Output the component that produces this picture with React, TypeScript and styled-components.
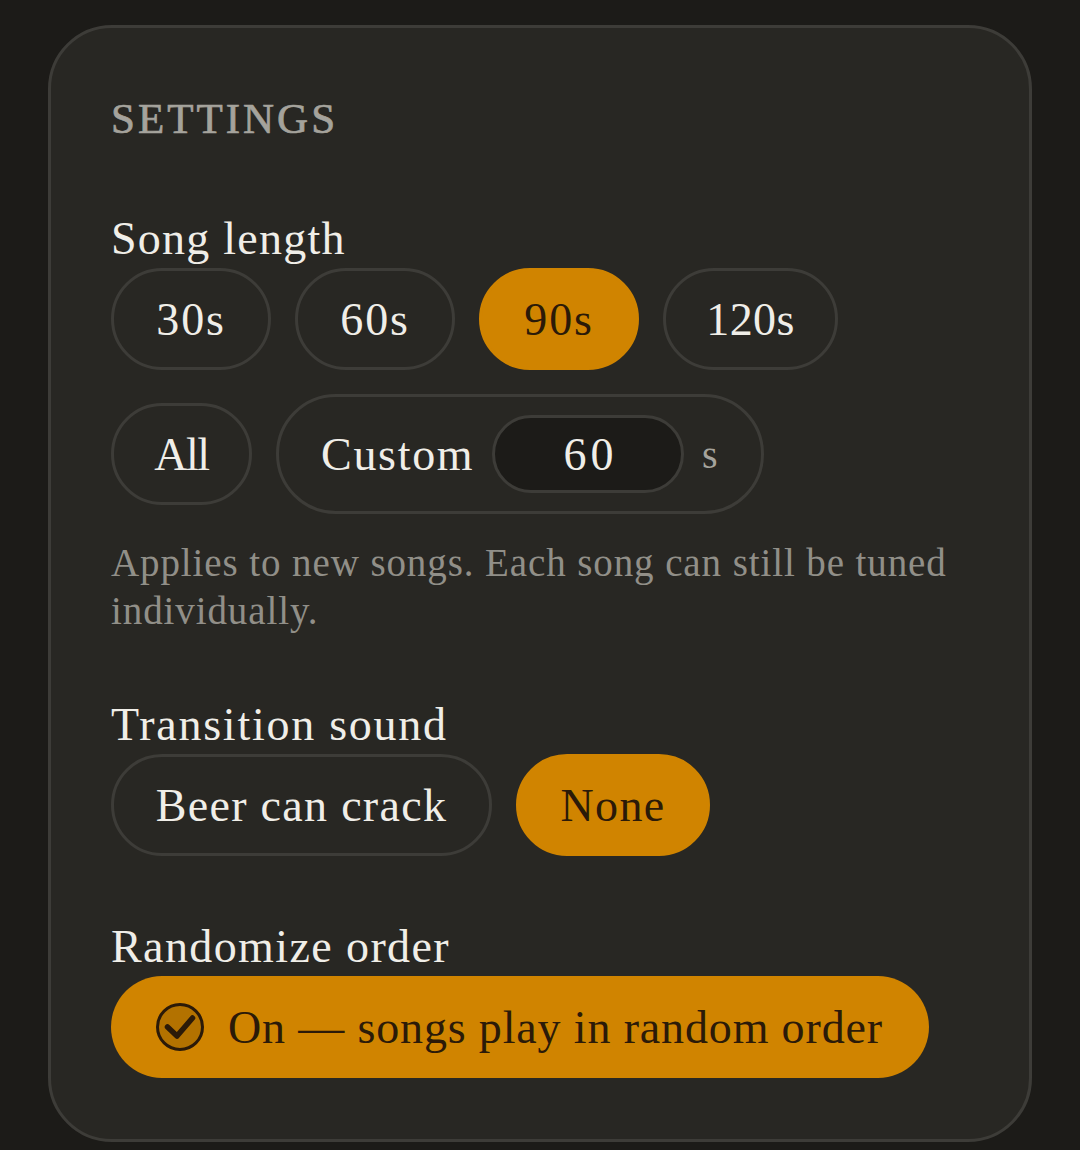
import React from "react";
import styled, { createGlobalStyle } from "styled-components";

const Global = createGlobalStyle`
  html, body { margin: 0; padding: 0; background: #1c1b18; }
  body { font-family: "Liberation Serif", "Times New Roman", serif; }
`;

const Page = styled.div`
  padding: 25px 48px 9px;
  width: 1080px;
  box-sizing: border-box;
`;

const Card = styled.section`
  box-sizing: border-box;
  width: 984px;
  background: #282723;
  border: 3px solid #3d3c38;
  border-radius: 64px;
  padding: 62px 60px 61px;
`;

const Title = styled.h2`
  margin: 0 0 64px;
  padding-top: 1px;
  height: 55px;
  font-size: 43px;
  line-height: 56px;
  font-weight: 400;
  letter-spacing: 3px;
  color: #a5a39c;
  -webkit-text-stroke: 0.7px #a5a39c;
`;

const Group = styled.div<{ $gap?: number }>`
  margin-bottom: ${(p) => p.$gap ?? 0}px;
`;

const Label = styled.div<{ $track: number }>`
  font-size: 46px;
  line-height: 58px;
  color: #f0eee8;
  letter-spacing: ${(p) => p.$track}px;
`;

const Row = styled.div`
  display: flex;
  align-items: center;
  gap: 24px;
  margin-bottom: 24px;
  &:last-child { margin-bottom: 0; }
`;

const Pill = styled.button<{ $w: number; $on?: boolean; $track?: number }>`
  box-sizing: border-box;
  width: ${(p) => p.$w}px;
  height: 102px;
  padding: 0;
  display: inline-flex;
  align-items: center;
  justify-content: center;
  border-radius: 60px;
  border: 3px solid ${(p) => (p.$on ? "#d08400" : "#3d3c38")};
  background: ${(p) => (p.$on ? "#d08400" : "transparent")};
  color: ${(p) => (p.$on ? "#2b1a08" : "#f0eee8")};
  font-family: inherit;
  font-size: 46px;
  letter-spacing: ${(p) => p.$track ?? 1.8}px;
`;

const CustomPill = styled.div`
  box-sizing: border-box;
  width: 488px;
  height: 120px;
  display: flex;
  align-items: center;
  border: 3px solid #3d3c38;
  border-radius: 60px;
  padding-left: 42px;
  color: #f0eee8;
  font-size: 46px;
`;

const CustomText = styled.span`
  width: 171px;
  flex: none;
  letter-spacing: 1.7px;
`;

const NumberBox = styled.div`
  box-sizing: border-box;
  width: 192px;
  height: 78px;
  padding-left: 5px;
  display: flex;
  align-items: center;
  justify-content: center;
  background: #1c1b18;
  border: 3px solid #3d3c38;
  border-radius: 40px;
  letter-spacing: 4px;
`;

const Unit = styled.span`
  margin-left: 18px;
  color: #a5a39c;
  font-size: 40px;
`;

const Help = styled.p`
  margin: 25px 0 0;
  font-size: 39px;
  line-height: 48px;
  color: #918f88;
  letter-spacing: 0.9px;
`;

const Toggle = styled.button`
  box-sizing: border-box;
  width: 818px;
  height: 102px;
  padding: 0 0 0 45px;
  display: flex;
  align-items: center;
  gap: 24px;
  border: 0;
  border-radius: 60px;
  background: #d08400;
  color: #2b1a08;
  font-family: inherit;
  font-size: 46px;
  letter-spacing: 0.85px;
`;

const Check = () => (
  <svg width="48" height="48" viewBox="0 0 48 48" style={{ flex: "none" }}>
    <circle cx="24" cy="24" r="22.5" fill="#b37200" stroke="#2b1a08" strokeWidth="3" />
    <path d="M11.5 24 L21 33 L36.5 15" fill="none" stroke="#2b1a08" strokeWidth="5.5" strokeLinecap="round" strokeLinejoin="round" />
  </svg>
);

export default function App() {
  return (
    <Page>
      <Global />
      <Card>
        <Title>SETTINGS</Title>
        <Group $gap={61}>
          <Label $track={1.25}>Song length</Label>
          <Row>
            <Pill $w={160}>30s</Pill>
            <Pill $w={160}>60s</Pill>
            <Pill $w={160} $on>90s</Pill>
            <Pill $w={175} $track={0.4}>120s</Pill>
          </Row>
          <Row>
            <Pill $w={141} $track={-1.5}>All</Pill>
            <CustomPill>
              <CustomText>Custom</CustomText>
              <NumberBox>60</NumberBox>
              <Unit>s</Unit>
            </CustomPill>
          </Row>
          <Help>Applies to new songs. Each song can still be tuned individually.</Help>
        </Group>
        <Group $gap={62}>
          <Label $track={1.75}>Transition sound</Label>
          <Row>
            <Pill $w={381} $track={1.3}>Beer can crack</Pill>
            <Pill $w={194} $on $track={1.3}>None</Pill>
          </Row>
        </Group>
        <Group>
          <Label $track={1.4}>Randomize order</Label>
          <Toggle>
            <Check />
            On — songs play in random order
          </Toggle>
        </Group>
      </Card>
    </Page>
  );
}
